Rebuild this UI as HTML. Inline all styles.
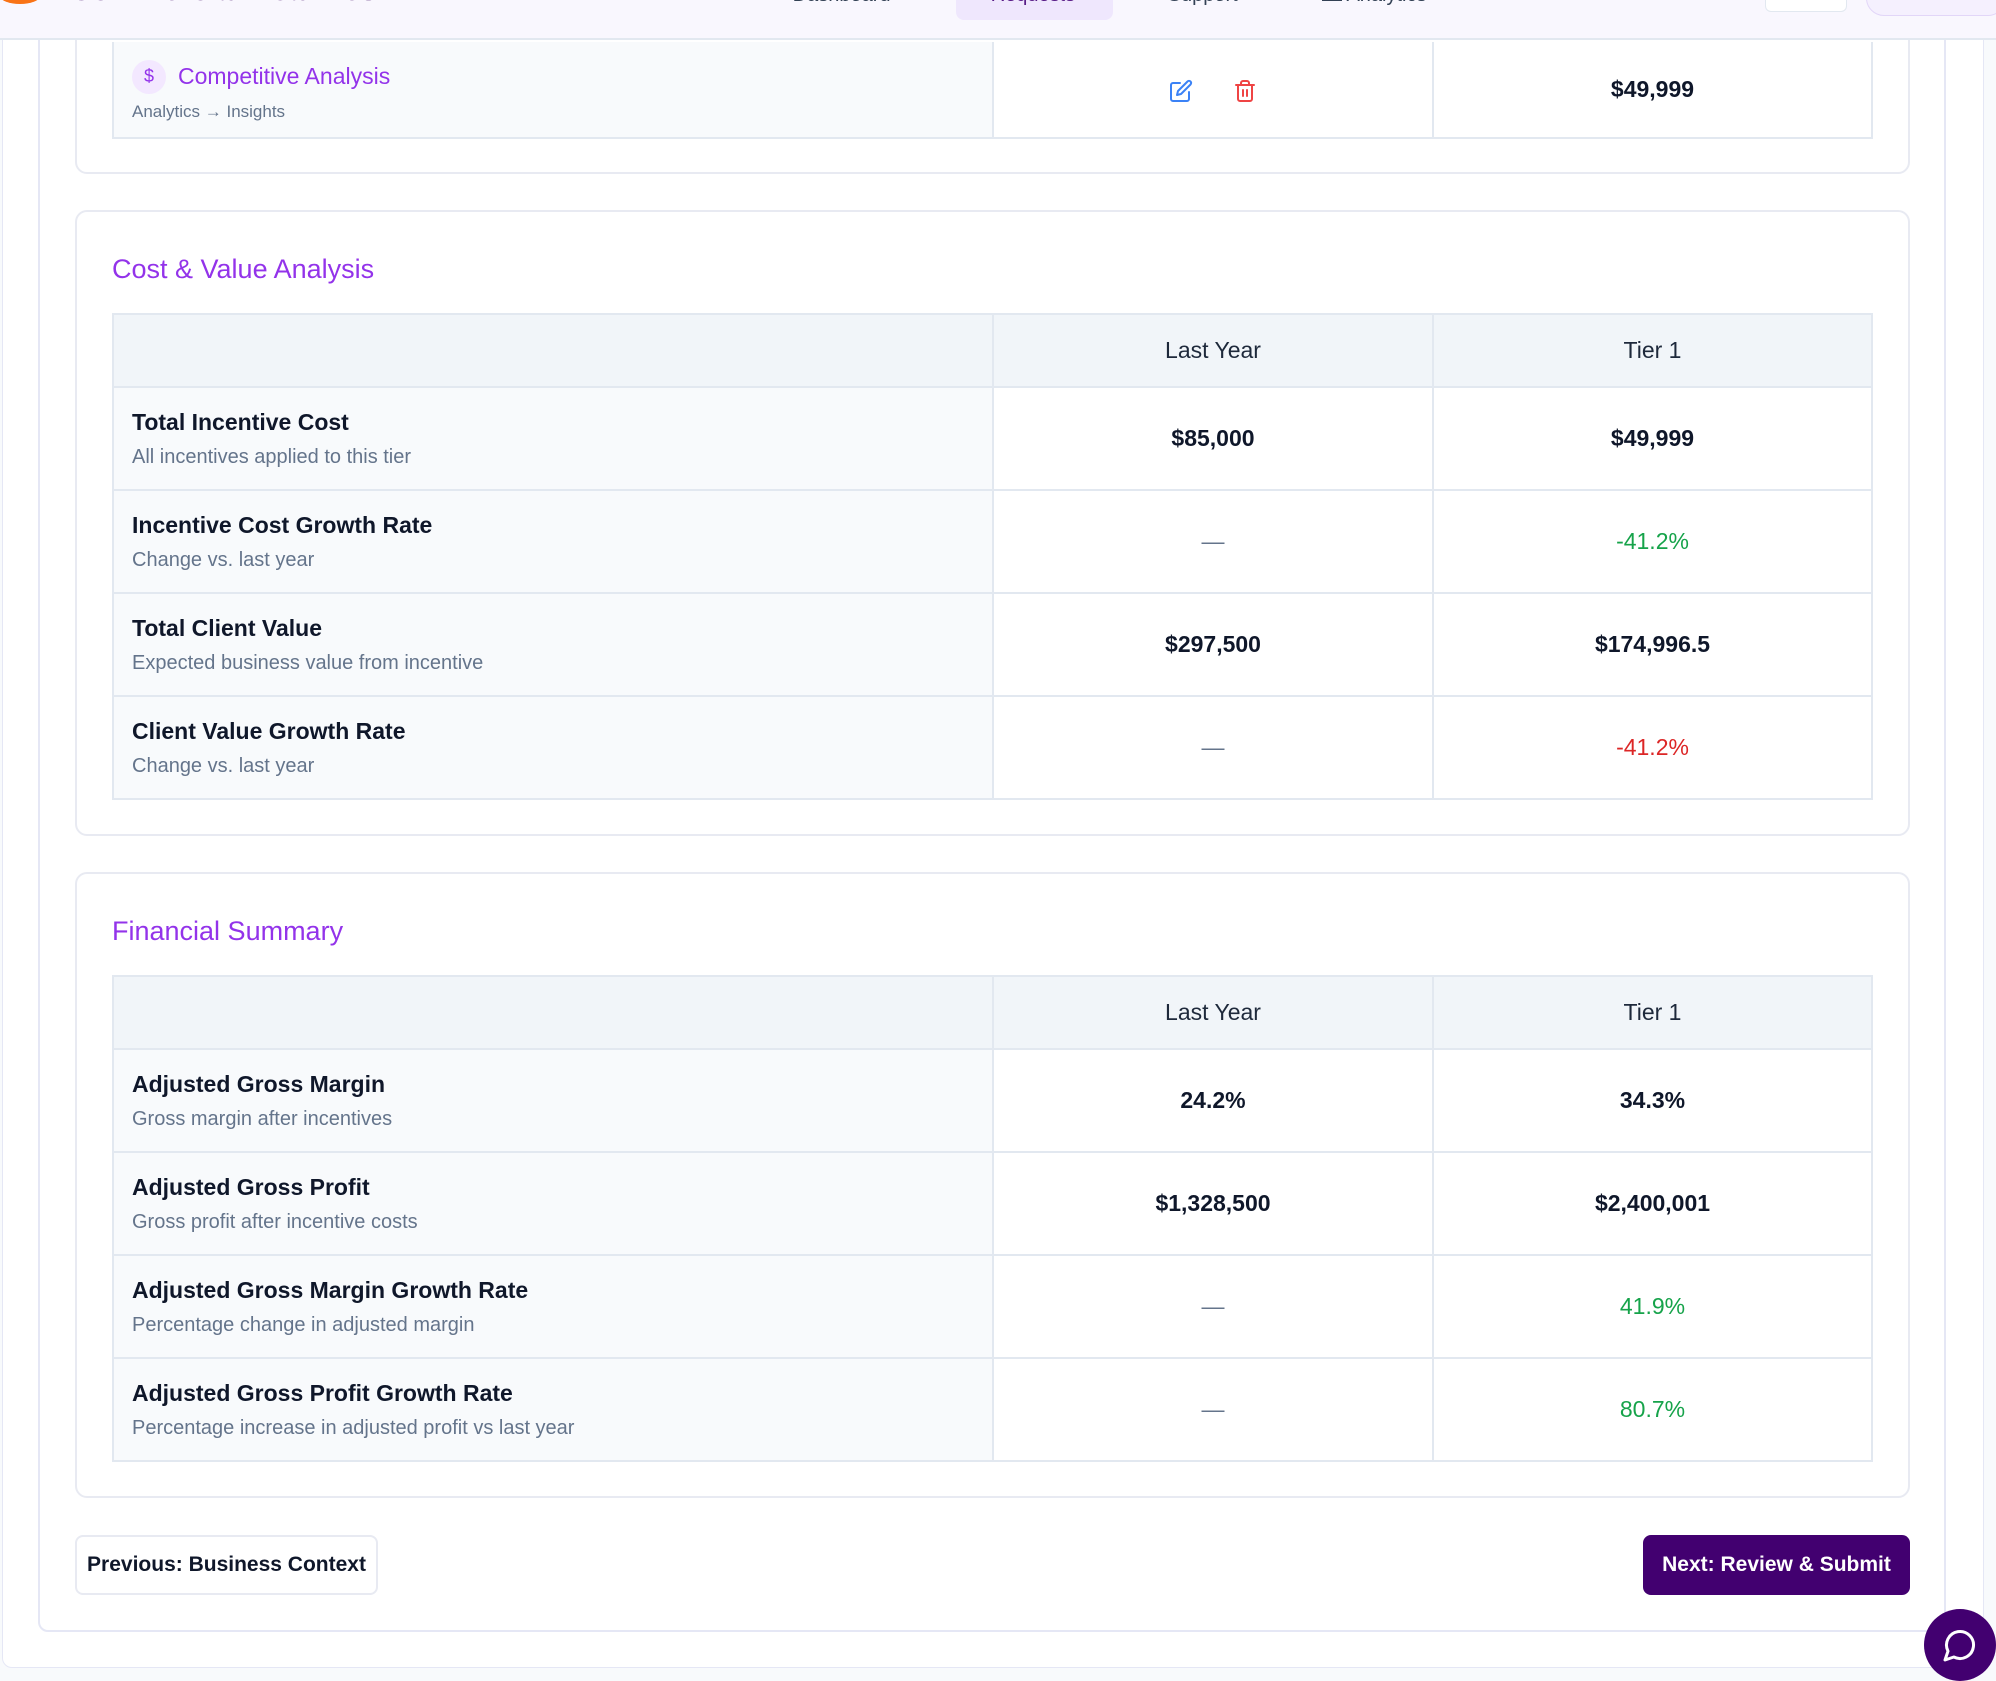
<!DOCTYPE html>
<html><head><meta charset="utf-8"><style>
*{box-sizing:border-box;margin:0;padding:0}
body{width:1996px;height:1681px;background:#f8fafc;font-family:"Liberation Sans",sans-serif;position:relative;overflow:hidden;color:#0f172a}
.abs{position:absolute}
.hdr{left:0;top:0;width:1996px;height:40px;background:#f9f7fe;border-bottom:2px solid #e2e8f0;z-index:5;overflow:hidden}
.outerpanel{left:2px;top:0;width:1982px;height:1668px;background:#fff;border:1px solid #e5e7f5;border-radius:0 0 10px 10px}
.inner{left:38px;top:0;width:1908px;height:1632px;background:#fff;border:2px solid #e5e7f5;border-radius:0 0 10px 10px}
.card{left:75px;width:1835px;background:#fff;border:2px solid #e8eaf2;border-radius:12px}
.title{font-size:27px;color:#9333ea;position:absolute;left:35px}
table{position:absolute;left:35px;width:1761px;border-collapse:collapse;table-layout:fixed}
td,th{border:2px solid #e2e8f0}
th{background:#f1f5f9;font-weight:normal;font-size:23px;color:#1e293b;height:73px}
td{height:103px;text-align:center;font-size:23px;font-weight:bold}
td.l{background:#f8fafc;text-align:left;padding-left:18px;font-weight:normal}
.n{font-size:23px;font-weight:bold;color:#0f172a;display:block;margin-bottom:6px}
.s{font-size:20px;color:#64748b}
.g{color:#16a34a;font-weight:normal}.r{color:#dc2626;font-weight:normal}
.d{color:#64748b;font-weight:normal}
</style></head><body>
<div class="abs outerpanel"></div>
<div class="abs inner"></div>
<div class="abs hdr">
 <div class="abs" style="left:0;top:-12px;width:40px;height:16px;background:#f97316;border-radius:50%"></div>
 <div class="abs" style="left:70px;top:-26px;font-size:30px;font-weight:bold;color:#3b0764">Commercial Deal Desk</div>
 <div class="abs" style="left:780px;top:-16px;font-size:20px;color:#334155">▪ Dashboard</div>
 <div class="abs" style="left:956px;top:-10px;width:157px;height:30px;background:#efe7fd;border-radius:8px"></div>
 <div class="abs" style="left:978px;top:-16px;font-size:20px;color:#581c87">▫ Requests</div>
 <div class="abs" style="left:1150px;top:-16px;font-size:20px;color:#334155">○ Support</div>
 <div class="abs" style="left:1322px;top:-16px;font-size:20px;color:#334155">▬ Analytics</div>
 <div class="abs" style="left:1765px;top:-10px;width:82px;height:22px;border:1px solid #e2e8f0;border-radius:6px;background:#fff"></div>
 <div class="abs" style="left:1866px;top:-20px;width:140px;height:36px;border:1px solid #e2d6f8;border-radius:18px;background:#f5f0fe"></div>
</div>

<div class="abs card" style="top:-20px;height:194px">
 <table style="top:60px">
  <colgroup><col style="width:880px"><col style="width:440px"><col></colgroup>
  <tr><td class="l" style="height:96px;border-top:none">
   <div style="display:flex;align-items:center;gap:12px;margin-top:2px"><span style="width:34px;height:34px;border-radius:50%;background:#f3e8ff;color:#9333ea;font-size:18px;display:inline-flex;align-items:center;justify-content:center">$</span><span style="font-size:23px;color:#9333ea">Competitive Analysis</span></div>
   <div style="font-size:17px;color:#64748b;margin-top:8px">Analytics → Insights</div></td>
  <td style="height:96px;border-top:none">
   <svg width="24" height="24" viewBox="0 0 24 24" fill="none" stroke="#3b82f6" stroke-width="2" stroke-linecap="round" stroke-linejoin="round" style="vertical-align:middle;margin-right:40px"><path d="M11 4H4a2 2 0 0 0-2 2v14a2 2 0 0 0 2 2h14a2 2 0 0 0 2-2v-7"/><path d="M18.5 2.5a2.1 2.1 0 0 1 3 3L12 15l-4 1 1-4z"/></svg><svg width="24" height="24" viewBox="0 0 24 24" fill="none" stroke="#ef4444" stroke-width="2" stroke-linecap="round" stroke-linejoin="round" style="vertical-align:middle"><path d="M3 6h18M19 6v14a2 2 0 0 1-2 2H7a2 2 0 0 1-2-2V6M8 6V4a2 2 0 0 1 2-2h4a2 2 0 0 1 2 2v2M10 11v6M14 11v6"/></svg></td>
  <td style="height:96px;border-top:none">$49,999</td></tr>
 </table>
</div>

<div class="abs card" style="top:210px;height:626px">
 <div class="title" style="top:42px">Cost &amp; Value Analysis</div>
 <table style="top:101px">
  <colgroup><col style="width:880px"><col style="width:440px"><col></colgroup>
  <tr><th></th><th>Last Year</th><th>Tier 1</th></tr>
  <tr><td class="l"><span class="n">Total Incentive Cost</span><span class="s">All incentives applied to this tier</span></td><td>$85,000</td><td>$49,999</td></tr>
  <tr><td class="l"><span class="n">Incentive Cost Growth Rate</span><span class="s">Change vs. last year</span></td><td class="d">—</td><td class="g">-41.2%</td></tr>
  <tr><td class="l"><span class="n">Total Client Value</span><span class="s">Expected business value from incentive</span></td><td>$297,500</td><td>$174,996.5</td></tr>
  <tr><td class="l"><span class="n">Client Value Growth Rate</span><span class="s">Change vs. last year</span></td><td class="d">—</td><td class="r">-41.2%</td></tr>
 </table>
</div>

<div class="abs card" style="top:872px;height:626px">
 <div class="title" style="top:42px">Financial Summary</div>
 <table style="top:101px">
  <colgroup><col style="width:880px"><col style="width:440px"><col></colgroup>
  <tr><th></th><th>Last Year</th><th>Tier 1</th></tr>
  <tr><td class="l"><span class="n">Adjusted Gross Margin</span><span class="s">Gross margin after incentives</span></td><td>24.2%</td><td>34.3%</td></tr>
  <tr><td class="l"><span class="n">Adjusted Gross Profit</span><span class="s">Gross profit after incentive costs</span></td><td>$1,328,500</td><td>$2,400,001</td></tr>
  <tr><td class="l"><span class="n">Adjusted Gross Margin Growth Rate</span><span class="s">Percentage change in adjusted margin</span></td><td class="d">—</td><td class="g">41.9%</td></tr>
  <tr><td class="l"><span class="n">Adjusted Gross Profit Growth Rate</span><span class="s">Percentage increase in adjusted profit vs last year</span></td><td class="d">—</td><td class="g">80.7%</td></tr>
 </table>
</div>

<div class="abs" style="left:75px;top:1535px;width:303px;height:60px;border:2px solid #e8eaf2;border-radius:8px;background:#fff;font-size:21px;font-weight:bold;display:flex;align-items:center;justify-content:center">Previous: Business Context</div>
<div class="abs" style="left:1643px;top:1535px;width:267px;height:60px;border-radius:8px;background:#420070;color:#fff;font-size:21px;font-weight:bold;display:flex;align-items:center;justify-content:center">Next: Review &amp; Submit</div>
<div class="abs" style="left:1924px;top:1609px;width:72px;height:72px;border-radius:50%;background:#420070;display:flex;align-items:center;justify-content:center">
 <svg width="36" height="36" viewBox="0 0 24 24" fill="none" stroke="#fff" stroke-width="2" stroke-linecap="round" stroke-linejoin="round"><path d="M7.9 20A9 9 0 1 0 4 16.1L2 22z"/></svg>
</div>
</body></html>
